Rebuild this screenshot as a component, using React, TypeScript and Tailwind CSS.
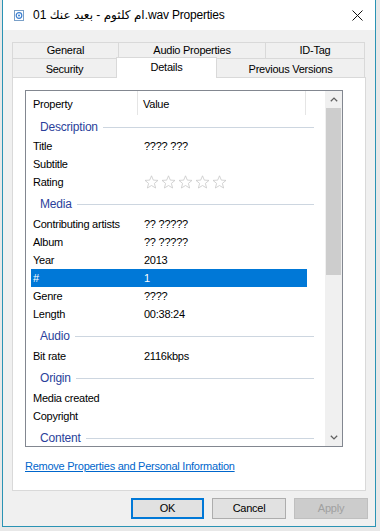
import React from "react";

const font = { fontFamily: '"Liberation Sans", "DejaVu Sans", Arial, sans-serif' };

function Star() {
  return (
    <svg width="15" height="14" viewBox="0 0 15 14" className="mr-[2px]">
      <path
        d="M7.5 0.8 L9.3 5.1 L14 5.4 L10.4 8.4 L11.6 13 L7.5 10.5 L3.4 13 L4.6 8.4 L1 5.4 L5.7 5.1 Z"
        fill="none"
        stroke="#c8c8c8"
        strokeWidth="0.8"
        strokeLinejoin="round"
      />
    </svg>
  );
}

function Item({ label, value, selected }: { label: string; value?: React.ReactNode; selected?: boolean }) {
  return (
    <div
      className={`ml-[5px] w-[276px] h-[18px] flex items-center text-[11px] tracking-[-0.25px] ${
        selected ? "bg-[#0078d7] text-white" : "text-black"
      }`}
    >
      <span className="w-[113px] pl-[2px] shrink-0">{label}</span>
      <span className="flex items-center">{value}</span>
    </div>
  );
}

function Group({ label, first }: { label: string; first?: boolean }) {
  return (
    <div className={`${first ? "h-[22px]" : "h-[24px]"} pt-[2px] flex items-center pl-[14px] pr-[11px]`}>
      <span className="text-[12px] tracking-[-0.2px] text-[#2b3f9b]">{label}</span>
      <div className="flex-1 h-px bg-[#cdd6e0] ml-[5px]" />
    </div>
  );
}

export default function App() {
  return (
    <div className="w-[380px] h-[531px] bg-[#e8e8e8] overflow-hidden" style={font}>
      <div className="ml-[2px] w-[374px] h-[527px] border border-t-0 border-[#2a93b4] bg-[#f0f0f0] flex flex-col">
        {/* Title bar */}
        <div className="h-[30px] bg-white flex items-center shrink-0">
          <svg width="11" height="11" viewBox="0 0 11 11" className="ml-[11px] mt-[1px]">
            <rect x="0.5" y="0.5" width="9" height="10" fill="#fff" stroke="#7aa0c8" />
            <circle cx="5" cy="5.5" r="2.8" fill="none" stroke="#3b7fd0" strokeWidth="1.2" />
            <circle cx="5" cy="5.5" r="1" fill="#3b7fd0" />
          </svg>
          <span className="ml-[8px] text-[12px] text-black tracking-[-0.2px]">
            01 ام كلثوم - بعيد عنك.wav Properties
          </span>
          <div className="flex-1" />
          <svg width="11" height="11" viewBox="0 0 11 11" className="mr-[12px]">
            <path d="M0.5 0.5 L10.5 10.5 M10.5 0.5 L0.5 10.5" stroke="#111" strokeWidth="1" />
          </svg>
        </div>

        {/* Body */}
        <div className="flex-1 flex flex-col pt-[12px] px-[9px]">
          {/* Tabs row 1 */}
          <div className="flex h-[16px] text-[11px] tracking-[-0.25px] text-black">
            <div className="w-[106px] border-t border-l border-[#d9d9d9] flex items-center justify-center">General</div>
            <div className="w-[147px] border-t border-l border-[#d9d9d9] flex items-center justify-center">Audio Properties</div>
            <div className="w-[100px] border-t border-l border-r border-[#d9d9d9] flex items-center justify-center">ID-Tag</div>
          </div>
          {/* Tabs row 2 */}
          <div className="flex items-end h-[19px] text-[11px] tracking-[-0.25px] text-black">
            <div className="w-[104px] h-[19px] border-t border-l border-[#d9d9d9] flex items-center justify-center pt-[2px]">Security</div>
            <div className="relative z-10 w-[101px] h-[21px] mb-[-1px] bg-white border-t border-l border-r border-[#d9d9d9] flex items-center justify-center pb-[1px]">Details</div>
            <div className="w-[148px] h-[19px] border-t border-r border-[#d9d9d9] flex items-center justify-center pt-[2px]">Previous Versions</div>
          </div>

          {/* Panel */}
          <div className="w-[354px] h-[414px] bg-white border border-[#d9d9d9] pt-[12px] pl-[12px] flex flex-col">
            <div className="w-[318px] h-[357px] border border-[#828790] flex overflow-hidden">
              <div className="w-[299px] h-full overflow-hidden flex flex-col">
                {/* Header */}
                <div className="h-[24px] shrink-0 flex text-[11px] tracking-[-0.25px] text-black">
                  <div className="w-[112px] pl-[7px] pt-[3px] flex items-center border-r border-[#e5e5e5]">Property</div>
                  <div className="w-[168px] pl-[5px] pt-[3px] flex items-center border-r border-[#e5e5e5]">Value</div>
                </div>
                <div className="shrink-0">
                  <Group label="Description" first />
                  <Item label="Title" value="???? ???" />
                  <Item label="Subtitle" />
                  <Item
                    label="Rating"
                    value={
                      <span className="flex">
                        <Star />
                        <Star />
                        <Star />
                        <Star />
                        <Star />
                      </span>
                    }
                  />
                  <Group label="Media" />
                  <Item label="Contributing artists" value="?? ?????" />
                  <Item label="Album" value="?? ?????" />
                  <Item label="Year" value="2013" />
                  <Item label="#" value="1" selected />
                  <Item label="Genre" value="????" />
                  <Item label="Length" value="00:38:24" />
                  <Group label="Audio" />
                  <Item label="Bit rate" value="2116kbps" />
                  <Group label="Origin" />
                  <Item label="Media created" />
                  <Item label="Copyright" />
                  <Group label="Content" />
                </div>
              </div>
              {/* Scrollbar */}
              <div className="w-[17px] h-full bg-[#f0f0f0] flex flex-col">
                <div className="h-[17px] flex items-center justify-center">
                  <svg width="8" height="5" viewBox="0 0 8 5">
                    <path d="M0.8 4.3 L4 1.1 L7.2 4.3" fill="none" stroke="#606060" strokeWidth="1.3" />
                  </svg>
                </div>
                <div className="h-[167px] mx-[1px] bg-[#cdcdcd]" />
                <div className="flex-1" />
                <div className="h-[17px] flex items-center justify-center">
                  <svg width="8" height="5" viewBox="0 0 8 5">
                    <path d="M0.8 0.7 L4 3.9 L7.2 0.7" fill="none" stroke="#606060" strokeWidth="1.3" />
                  </svg>
                </div>
              </div>
            </div>
            <div className="mt-[12px] text-[11px] tracking-[-0.25px] text-[#0066cc] underline leading-[14px]">
              Remove Properties and Personal Information
            </div>
          </div>

          {/* Buttons */}
          <div className="flex justify-end gap-[8px] mt-[7px] mr-[-2px] text-[11px] tracking-[-0.25px]">
            <div className="w-[73px] h-[21px] bg-[#e1e1e1] border-2 border-[#0078d7] flex items-center justify-center text-black">OK</div>
            <div className="w-[74px] h-[21px] bg-[#e1e1e1] border border-[#adadad] flex items-center justify-center text-black">Cancel</div>
            <div className="w-[74px] h-[21px] bg-[#cccccc] border border-[#bfbfbf] flex items-center justify-center text-[#a0a0a0]">Apply</div>
          </div>
        </div>
      </div>
    </div>
  );
}
